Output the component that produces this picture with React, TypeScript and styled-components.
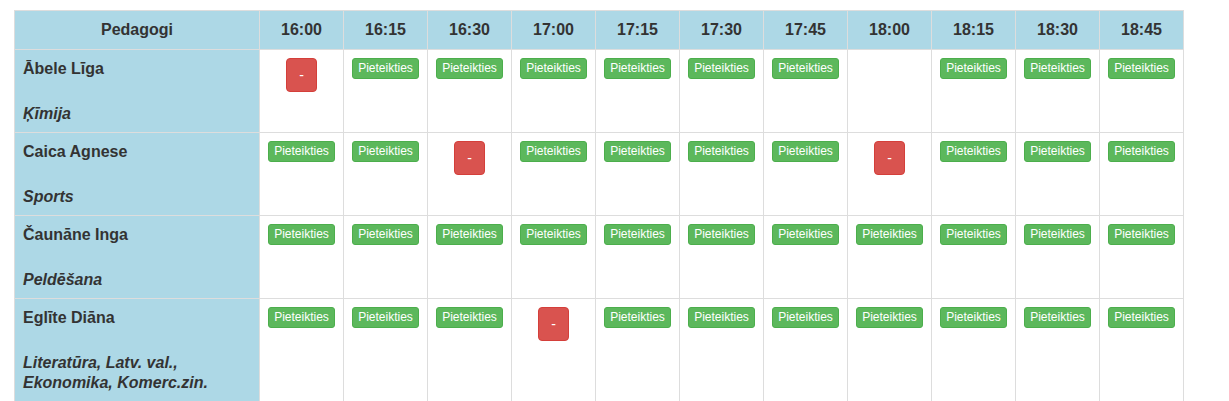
import { styled, createGlobalStyle } from "styled-components"

const GlobalStyle = createGlobalStyle`
    body {
        margin: 0;
        background: white;
        font-family: "Liberation Sans", Arial, sans-serif;
        color: #333;
    }
`

const Page = styled.div`
    padding: 10px 14px;
`

const Table = styled.table`
    border-collapse: collapse;
    table-layout: fixed;
    width: 1170px;
    border: 1px solid #ddd;
    font-size: 16px;
    line-height: 22px;
`

const HeadCell = styled.th`
    background-color: #add8e6;
    border: 1px solid #ddd;
    padding: 8px;
    font-weight: bold;
    text-align: center;
`

const NameCell = styled.td`
    background-color: #add8e6;
    border: 1px solid #ddd;
    padding: 8px;
    vertical-align: top;
    height: 66px;
`

const Name = styled.div`
    font-weight: bold;
`

const Subject = styled.div`
    margin-top: 24px;
    font-weight: bold;
    font-style: italic;
    line-height: 20px;
`

const SlotCell = styled.td`
    border: 1px solid #ddd;
    padding: 8px 0;
    vertical-align: top;
    text-align: center;
`

const Button = styled.button<{ $taken?: boolean }>`
    display: inline-block;
    vertical-align: top;
    font-family: "Liberation Sans", Arial, sans-serif;
    color: white;
    cursor: pointer;
    border: 1px solid ${p => p.$taken ? "#d43f3a" : "#4cae4c"};
    background-color: ${p => p.$taken ? "#d9534f" : "#5cb85c"};
    border-radius: ${p => p.$taken ? "4px" : "3px"};
    font-size: ${p => p.$taken ? "14px" : "12px"};
    line-height: ${p => p.$taken ? "20px" : "17px"};
    padding: ${p => p.$taken ? "6px 12px" : "1px 5px"};
    margin: 0;
`

const times = ["16:00", "16:15", "16:30", "17:00", "17:15", "17:30", "17:45", "18:00", "18:15", "18:30", "18:45"]

// g = free, r = taken, - = nothing
const teachers = [
    { name: "Ābele Līga", subject: "Ķīmija", slots: "r g g g g g g - g g g" },
    { name: "Caica Agnese", subject: "Sports", slots: "g g r g g g g r g g g" },
    { name: "Čaunāne Inga", subject: "Peldēšana", slots: "g g g g g g g g g g g" },
    { name: "Eglīte Diāna", subject: "Literatūra, Latv. val., Ekonomika, Komerc.zin.", slots: "g g g r g g g g g g g" },
]

export default function App() {
    return (
        <Page>
            <GlobalStyle />
            <Table>
                <colgroup>
                    <col style={{ width: 245 }} />
                    {times.map(t => <col key={t} style={{ width: 84 }} />)}
                </colgroup>
                <thead>
                    <tr>
                        <HeadCell>Pedagogi</HeadCell>
                        {times.map(t => <HeadCell key={t}>{t}</HeadCell>)}
                    </tr>
                </thead>
                <tbody>
                    {teachers.map(teacher => (
                        <tr key={teacher.name}>
                            <NameCell>
                                <Name>{teacher.name}</Name>
                                <Subject>{teacher.subject}</Subject>
                            </NameCell>
                            {teacher.slots.split(" ").map((s, i) => (
                                <SlotCell key={i}>
                                    {s === "g" && <Button>Pieteikties</Button>}
                                    {s === "r" && <Button $taken>-</Button>}
                                </SlotCell>
                            ))}
                        </tr>
                    ))}
                </tbody>
            </Table>
        </Page>
    )
}
